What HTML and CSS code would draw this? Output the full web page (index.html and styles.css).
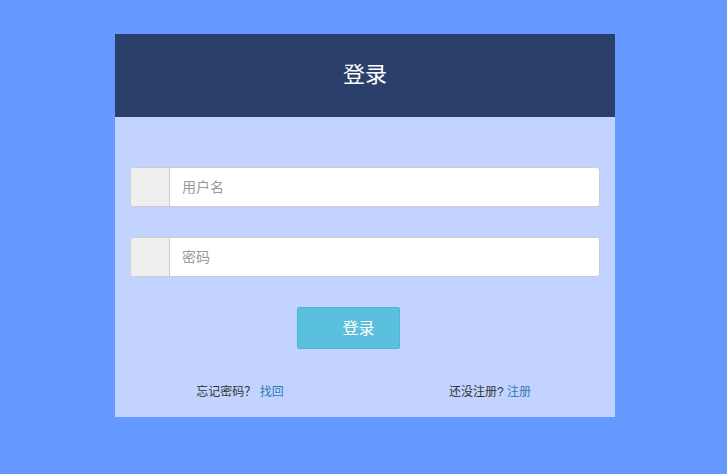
FILE: index.html
```html
<!DOCTYPE html>
<html lang="zh-CN">
<head>
<meta charset="UTF-8" />
<title>登录</title>
<link rel="stylesheet" href="styles.css">
</head>
<body>
<div class="login-box">
  <div class="login-head">登录</div>
  <form class="login-body">
    <div class="input-group">
      <span class="addon"></span>
      <input type="text" placeholder="用户名" />
    </div>
    <div class="input-group">
      <span class="addon"></span>
      <input type="password" placeholder="密码" />
    </div>
    <div class="btn-row">
      <button type="button" class="btn-login">登录</button>
    </div>
    <div class="links">
      <div class="col">忘记密码？ <a href="#">找回</a></div>
      <div class="col">还没注册? <a href="#">注册</a></div>
    </div>
  </form>
</div>
</body>
</html>
```

FILE: styles.css
```css
html, body {
  margin: 0;
  padding: 0;
}
body {
  background: #6699ff;
  font-family: "Liberation Sans", "Noto Sans CJK SC", sans-serif;
  font-size: 12px;
  color: #333;
  height: 474px;
  overflow: hidden;
}
.login-box {
  width: 500px;
  margin: 34px 0 0 115px;
  background: #c2d3ff;
}
.login-head {
  height: 83px;
  background: #2b3f6b;
  color: #fff;
  font-size: 22px;
  display: flex;
  align-items: center;
  justify-content: center;
  padding-bottom: 8px;
  box-sizing: border-box;
}
.login-body {
  padding: 50px 15px 0;
  margin: 0;
  height: 300px;
  box-sizing: border-box;
}
.input-group {
  display: flex;
  height: 40px;
  border: 1px solid #ccc;
  border-radius: 4px;
  background: #fff;
  box-sizing: border-box;
  overflow: hidden;
  margin-bottom: 30px;
}
.addon {
  width: 38px;
  background: #eee;
  border-right: 1px solid #ccc;
}
.input-group input {
  flex: 1;
  border: none;
  outline: none;
  padding: 0 12px;
  font-family: inherit;
  font-size: 14px;
  color: #555;
}
.input-group input::placeholder {
  color: #999;
}
.btn-row {
  display: flex;
  padding-left: 167px;
}
.btn-login {
  width: 103px;
  height: 42px;
  background: #5bc0de;
  border: 1px solid #46b8da;
  border-radius: 2px;
  color: #fff;
  font-family: inherit;
  font-size: 16px;
  padding: 0 0 2px 20px;
}
.links {
  display: flex;
  margin: 33px -15px 0;
}
.links .col {
  flex: 1;
  text-align: center;
}
.links a {
  color: #337ab7;
  text-decoration: none;
}
```
